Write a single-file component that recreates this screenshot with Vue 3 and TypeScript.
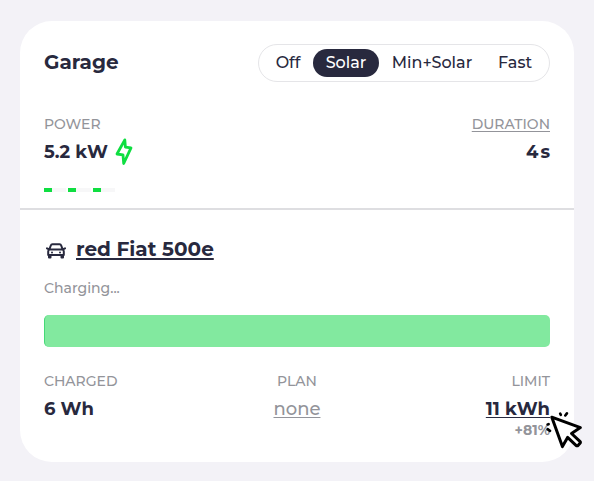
<script setup lang="ts">
import { ref } from 'vue'

interface Mode { id: string; label: string }

const modes: Mode[] = [
  { id: 'off', label: 'Off' },
  { id: 'solar', label: 'Solar' },
  { id: 'minsolar', label: 'Min+Solar' },
  { id: 'fast', label: 'Fast' },
]
const active = ref('solar')
</script>

<template>
  <main class="page">
    <article class="card">
      <section class="loadpoint">
        <header class="header">
          <h1 class="title">Garage</h1>
          <div class="modes" role="group">
            <button
              v-for="mode in modes"
              :key="mode.id"
              type="button"
              :class="['mode', { active: active === mode.id }]"
              @click="active = mode.id"
            >{{ mode.label }}</button>
          </div>
        </header>
        <div class="stats">
          <div class="stat">
            <span class="label">POWER</span>
            <span class="value">5.2 kW
              <svg class="bolt" viewBox="0 0 18 28" aria-hidden="true">
                <path d="M9.8 1.9 2 16l6 .9.7 8.6 7.3-15.6-5.6-.8z" />
              </svg>
            </span>
          </div>
          <div class="stat end">
            <span class="label link">DURATION</span>
            <span class="value">4<span class="unit">s</span></span>
          </div>
        </div>
        <div class="phases">
          <div v-for="n in 3" :key="n" class="phase"><i class="current"></i></div>
        </div>
      </section>

      <section class="vehicle">
        <h2 class="name">
          <svg class="car" viewBox="0 0 20 16" aria-hidden="true">
            <path d="M3.3 6.7 4.8 2.5Q5.2 1.3 6.4 1.3h7.2q1.2 0 1.6 1.2l1.5 4.2M1 5.3l2.3 1.2h13.4L19 5.3M3.3 6.7q-1.1.5-1.1 1.7v3.7h15.6V8.4q0-1.2-1.1-1.7M3 12.2v2.2h1.5v-2.2m11 0v2.2H17v-2.2" />
            <circle cx="6" cy="9.4" r="1" /><circle cx="14" cy="9.4" r="1" />
          </svg>
          <span class="car-name">red Fiat 500e</span>
        </h2>
        <p class="status">Charging...</p>
        <div class="bar"></div>
        <div class="details">
          <div class="stat">
            <span class="label">CHARGED</span>
            <span class="value">6 Wh</span>
          </div>
          <div class="stat center">
            <span class="label">PLAN</span>
            <span class="value none">none</span>
          </div>
          <div class="stat end">
            <span class="label">LIMIT</span>
            <span class="value kwh">11 kWh</span>
            <span class="gain">+81%</span>
          </div>
        </div>
      </section>
    </article>

    <svg class="pointer" viewBox="0 0 38 42" aria-hidden="true">
      <path class="arrow" d="M5.8 7.2 34.4 17.6l-8.9 5.9 8.4 7.9q1 1-.1 2.2l-1.6 1.7q-1.1 1-2.2 0l-8.4-7.9-5.2 9.2z" />
      <path class="spark" d="m14.2 3.6.6 1.2M20.9 3.4 19.3 5.5M2.6 14.2l-1 .3M1.6 19.2l2.4 1.6" />
    </svg>
  </main>
</template>

<style>
body {
  background: #f3f2f7;
}
</style>

<style scoped>
.page {
  box-sizing: border-box;
  position: relative;
  width: 594px;
  height: 481px;
  padding: 21px 20px 19px;
  background: #f3f2f7;
  color: #28293e;
  font-family: Montserrat, Inter, "Liberation Sans", sans-serif;
}
.card {
  height: 441px;
  border-radius: 32px;
  background: #fff;
}
.loadpoint {
  box-sizing: border-box;
  height: 189px;
  padding: 23px 24px 0;
  border-bottom: 2px solid #dedee1;
}
.header,
.stats {
  display: flex;
  justify-content: space-between;
}
.header {
  height: 38px;
}
.title {
  margin: 0;
  font-size: 20px;
  line-height: 36px;
  font-weight: 700;
}
.modes {
  box-sizing: border-box;
  display: grid;
  grid-template-columns: 50px 66px 106px 60px;
  width: 292px;
  padding: 4px;
  border: 1px solid #e5e5e8;
  border-radius: 19px;
}
.mode {
  height: 28px;
  padding: 0;
  border: 0;
  border-radius: 14px;
  background: transparent;
  color: inherit;
  font: 500 16px/26px Montserrat, Inter, "Liberation Sans", sans-serif;
  white-space: nowrap;
}
.mode.active {
  background: #28293e;
  color: #fff;
}
.stats {
  margin-top: 32px;
}
.stat {
  display: flex;
  flex-direction: column;
  align-items: flex-start;
}
.end {
  align-items: flex-end;
}
.center {
  align-items: center;
}
.label {
  color: #93949a;
  font-size: 14px;
  line-height: 20px;
  font-weight: 500;
}
.link {
  text-decoration: underline;
  text-underline-offset: 2px;
}
.value {
  display: flex;
  align-items: center;
  height: 28px;
  margin-top: 4px;
  font-size: 18px;
  line-height: 28px;
  font-weight: 700;
}
.unit {
  margin-left: 2px;
}
.bolt {
  width: 18px;
  height: 28px;
  margin-left: 7px;
  fill: none;
  stroke: #0fde41;
  stroke-width: 2.8;
  stroke-linejoin: round;
}
.phases {
  display: flex;
  gap: 2px;
  margin-top: 22px;
}
.phase {
  width: 22.3px;
  height: 4px;
  background: #f7f7f8;
}
.current {
  display: block;
  width: 8px;
  height: 4px;
  background: #0fde41;
}
.vehicle {
  padding: 23px 24px 0;
}
.name {
  display: flex;
  align-items: center;
  height: 32px;
  margin: 0;
  font-size: 20px;
  line-height: 32px;
}
.car {
  width: 20px;
  height: 16px;
  margin: 4px 10px 0 2px;
  fill: none;
  stroke: #28293e;
  stroke-width: 2;
  stroke-linejoin: round;
  stroke-linecap: round;
}
.car circle {
  fill: #28293e;
  stroke: none;
}
.car-name {
  text-decoration: underline;
  text-decoration-thickness: 2px;
  text-underline-offset: 2px;
}
.status {
  margin: 13px 0 0;
  color: #93949a;
  font-size: 14px;
  line-height: 20px;
  font-weight: 500;
}
.bar {
  height: 32px;
  margin-top: 17px;
  box-sizing: border-box;
  border-left: 1px solid #45d977;
  border-radius: 5px;
  background: #82e99f;
}
.details {
  display: grid;
  grid-template-columns: 1fr 1fr 1fr;
  margin-top: 24px;
}
.none {
  color: #93949a;
  font-weight: 500;
  text-decoration: underline;
  text-underline-offset: 2px;
}
.kwh {
  text-decoration: underline;
  text-decoration-thickness: 1px;
  text-underline-offset: 2px;
}
.gain {
  margin-top: -2px;
  color: #93949a;
  font-size: 14px;
  line-height: 18px;
  font-weight: 700;
}
.pointer {
  position: absolute;
  left: 546px;
  top: 410px;
  width: 38px;
  height: 42px;
  fill: none;
  stroke: #000;
  stroke-width: 3;
  stroke-linejoin: round;
  stroke-linecap: round;
}
.arrow {
  fill: #fff;
}
.spark {
  stroke-width: 2.6;
}
</style>
